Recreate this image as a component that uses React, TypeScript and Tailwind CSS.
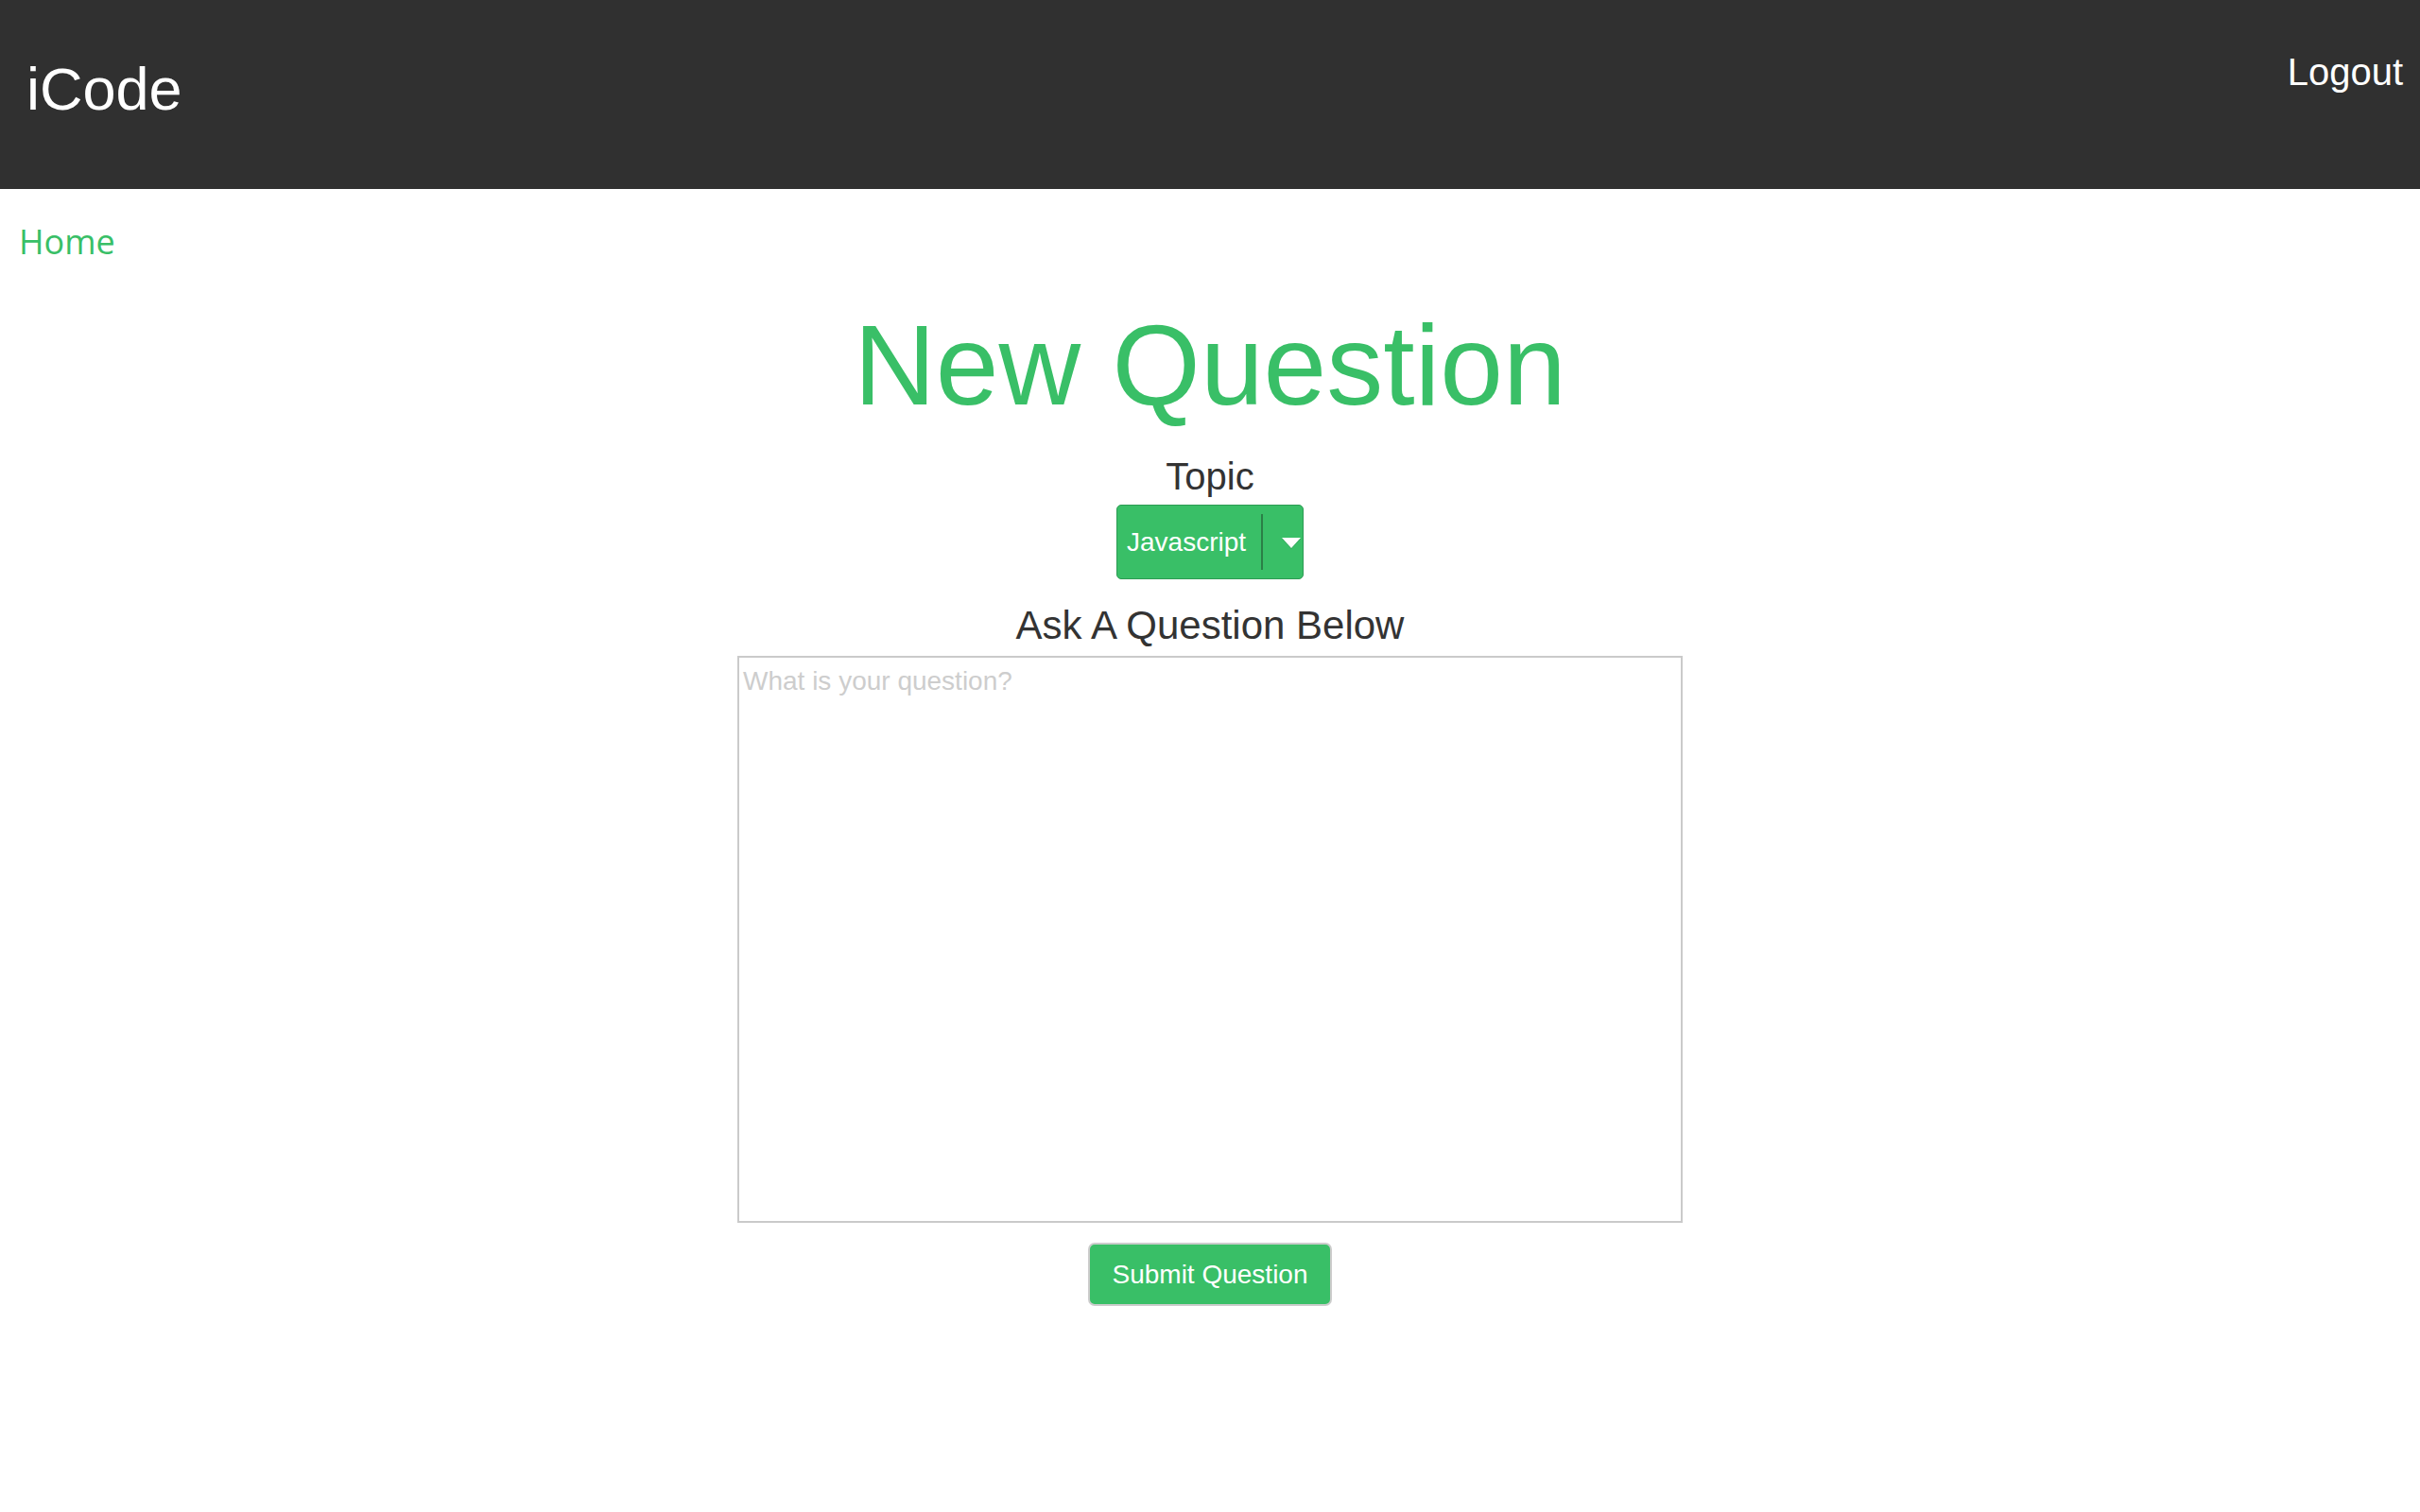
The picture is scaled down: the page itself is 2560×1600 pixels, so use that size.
import React from "react";

const sans = { fontFamily: '"Liberation Sans", Arial, Helvetica, sans-serif' };

const Header = () => {
  return (
    <header className="h-[200px] bg-[#303030] flex justify-between items-start">
      <a href="#" className="pl-[28px] pt-[63px] text-[63px] leading-none text-white">
        iCode
      </a>
      <a href="#" className="pr-[18px] pt-[56px] text-[40px] leading-none text-white">
        Logout
      </a>
    </header>
  );
};

const TopicSelect = () => {
  return (
    <div className="w-[198px] h-[79px] bg-[#39bf67] border border-[#2d9b53] rounded-[5px] flex items-center">
      <span className="pl-[10px] text-[28px] leading-none text-white">Javascript</span>
      <span className="ml-[16px] w-[2px] h-[59px] bg-[#2b7f47]" />
      <svg width="22" height="14" viewBox="0 0 22 14" className="ml-[19px] mt-[2px]">
        <polygon points="1,2 21,2 11,13" fill="#1f7a3f" opacity="0.35" />
        <polygon points="1,1 21,1 11,12" fill="#ffffff" />
      </svg>
    </div>
  );
};

export default function App() {
  return (
    <div className="min-h-[1600px] bg-white" style={sans}>
      <Header />

      <a
        href="#"
        className="block pl-[20px] mt-[38px] text-[36px] leading-none text-[#39bf67]"
        style={{ fontFamily: '"Open Sans", sans-serif' }}
      >
        Home
      </a>

      <main className="flex flex-col items-center">
        <h1 className="mt-[52px] text-[120px] leading-none text-[#39bf67]">New Question</h1>

        <h3 className="mt-[38px] text-[40px] leading-none text-[#333333]">Topic</h3>
        <div className="mt-[10px]">
          <TopicSelect />
        </div>

        <h3 className="mt-[28px] text-[42px] leading-none text-[#333333]">Ask A Question Below</h3>
        <textarea
          className="mt-[11px] w-[1000px] h-[600px] border-2 border-[#cacaca] px-[4px] pt-[9px] text-[28px] leading-[32px] text-[#333333] placeholder:text-[#cdcdcd] resize-none outline-none"
          placeholder="What is your question?"
        />

        <button className="mt-[21px] w-[258px] h-[67px] bg-[#39bf67] border-2 border-[#cccccc] rounded-[7px] text-[28px] leading-none text-white">
          Submit Question
        </button>
      </main>
    </div>
  );
}
